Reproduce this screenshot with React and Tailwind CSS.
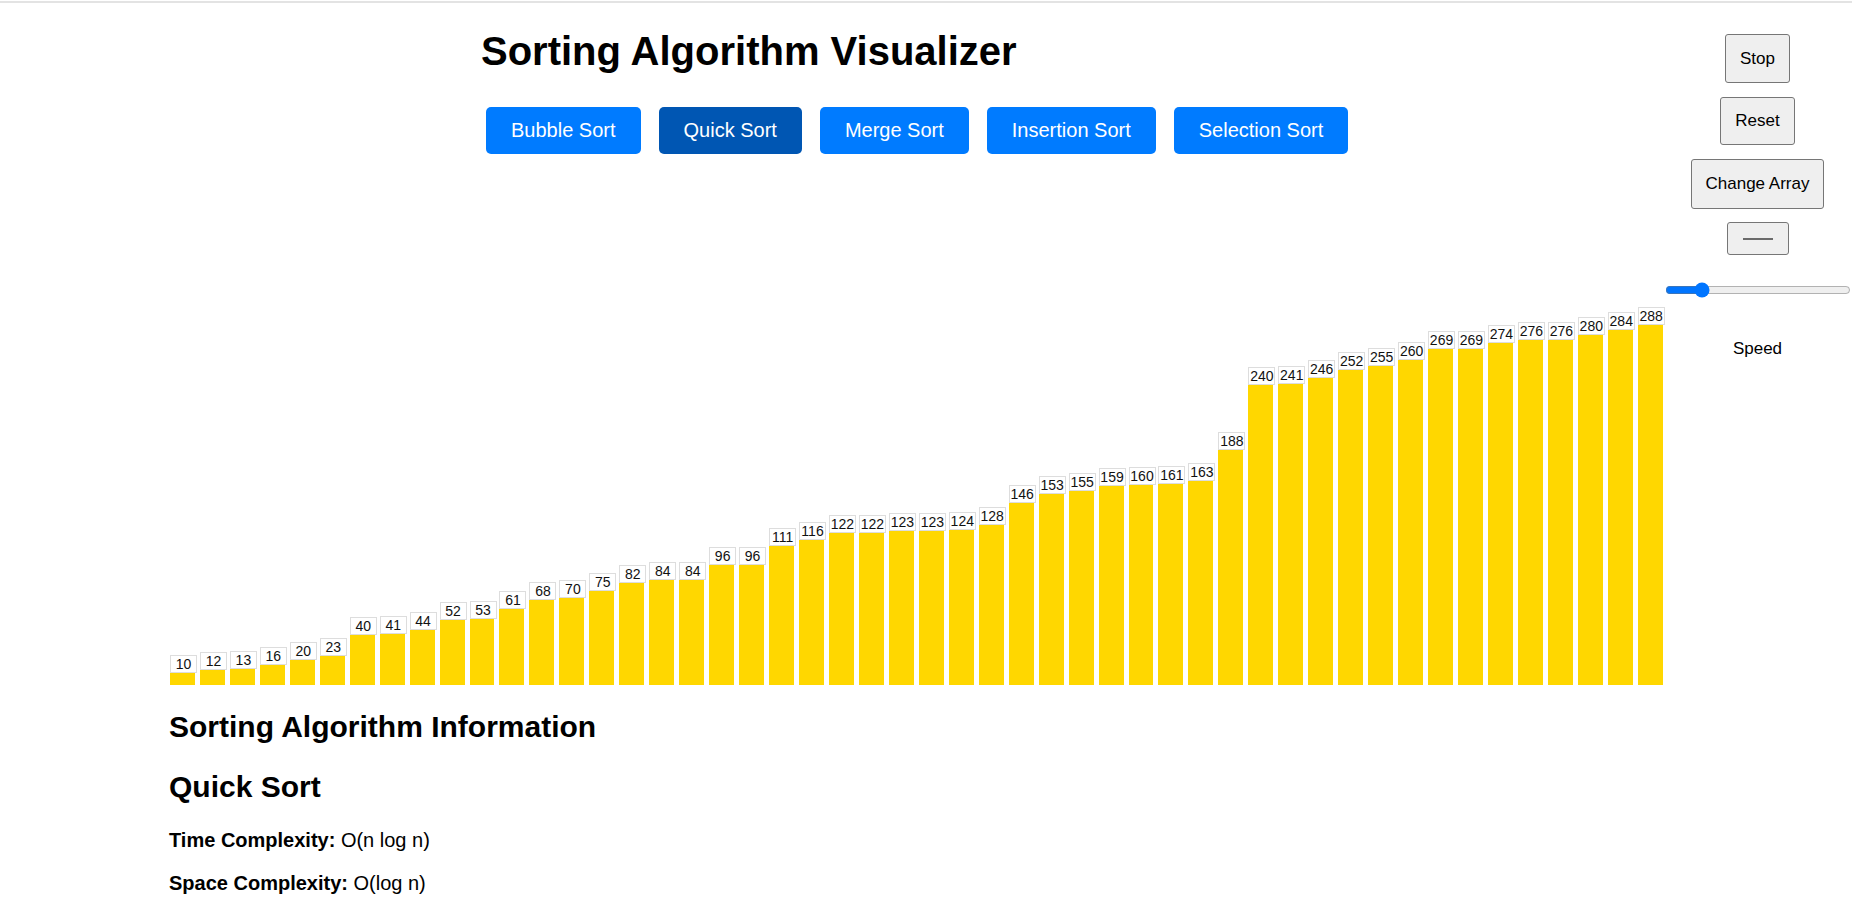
import { useState } from "react";

const values = [
  10, 12, 13, 16, 20, 23, 40, 41, 44, 52, 53, 61, 68, 70, 75, 82, 84, 84, 96, 96, 111, 116, 122, 122, 123,
  123, 124, 128, 146, 153, 155, 159, 160, 161, 163, 188, 240, 241, 246, 252, 255, 260, 269, 269, 274, 276,
  276, 280, 284, 288,
];

const algorithms = ["Bubble Sort", "Quick Sort", "Merge Sort", "Insertion Sort", "Selection Sort"];

export default function App() {
  const [active, setActive] = useState("Quick Sort");
  const [speed, setSpeed] = useState(18);

  return (
    <div className="min-h-screen bg-white font-['Liberation_Sans',Arial,sans-serif] text-[20px] text-black">
      <div className="mt-px h-[2px] bg-[#e3e3e3]" />
      <div className="flex">
        <main className="w-[1663px] shrink-0">
          <h1 className="ml-[481px] mt-[25px] text-[40px] font-bold leading-[46px]">Sorting Algorithm Visualizer</h1>

          <div className="ml-[486px] mt-[33px] flex gap-[18px]">
            {algorithms.map((name) => (
              <button
                key={name}
                onClick={() => setActive(name)}
                className={`h-[47px] rounded-[5px] px-[25px] text-[20px] leading-[23px] text-white ${
                  active === name ? "bg-[#0056b3]" : "bg-[#007bff]"
                }`}
              >
                {name}
              </button>
            ))}
          </div>

          <div className="ml-[170px] flex h-[531px] items-end gap-[5px]">
            {values.map((value, index) => (
              <div key={index} className="relative w-[25px] bg-[#ffd700]" style={{ height: `${value * 1.25}px` }}>
                <span className="absolute bottom-full left-0 box-content w-[25px] border border-[#dddddd] bg-white text-center text-[14px] leading-[16px] text-[#111]">
                  {value}
                </span>
              </div>
            ))}
          </div>

          <section className="ml-[169px] pb-8">
            <h2 className="mt-[25px] text-[30px] font-bold leading-[34.5px]">Sorting Algorithm Information</h2>
            <h2 className="mt-[25px] text-[30px] font-bold leading-[34.5px]">{active}</h2>
            <p className="mt-[25px] leading-[23px]">
              <strong>Time Complexity:</strong> O(n log n)
            </p>
            <p className="mt-[20px] leading-[23px]">
              <strong>Space Complexity:</strong> O(log n)
            </p>
          </section>
        </main>

        <aside className="flex w-[189px] flex-col items-center pt-[31px] text-[17px]">
          <button className="h-[49px] rounded-[3px] border border-[#767676] bg-[#efefef] px-[14px] leading-[20px]">
            Stop
          </button>
          <button className="mt-[14px] h-[48px] rounded-[3px] border border-[#767676] bg-[#efefef] px-[14px] leading-[20px]">
            Reset
          </button>
          <button className="mt-[14px] h-[50px] rounded-[3px] border border-[#767676] bg-[#efefef] px-[14px] leading-[20px]">
            Change Array
          </button>
          <button className="mt-[13px] flex h-[33px] w-[62px] items-center justify-center rounded-[3px] border border-[#767676] bg-[#efefef]">
            <span className="h-[2px] w-[30px] bg-[#6b6b6b]" />
          </button>
          <input
            type="range"
            min="1"
            max="100"
            value={speed}
            onChange={(event) => setSpeed(Number(event.target.value))}
            className="mt-[27px] h-4 w-[186px]"
          />
          <p className="mt-[41px] text-[17px] leading-[20px]">Speed</p>
        </aside>
      </div>
    </div>
  );
}
